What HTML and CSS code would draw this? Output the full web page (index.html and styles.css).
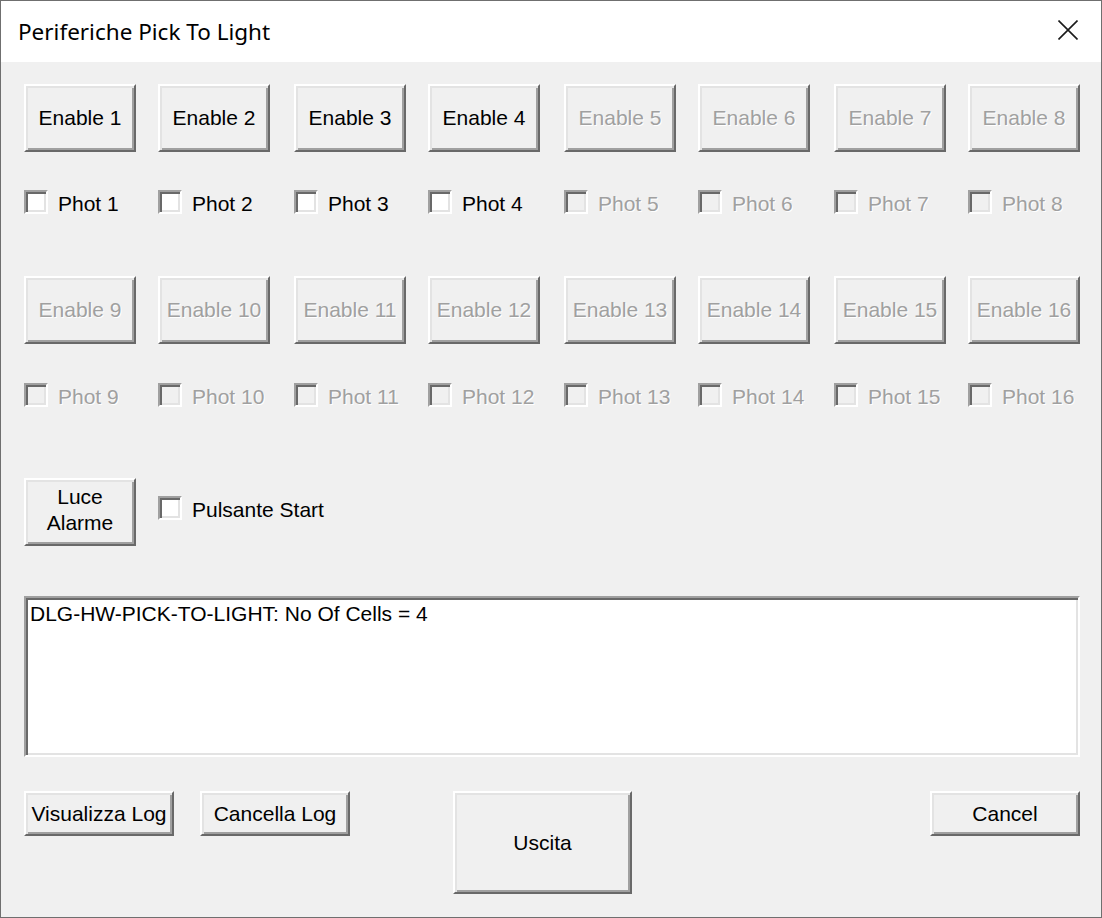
FILE: index.html
```html
<!DOCTYPE html>
<html lang="it">
<head>
<meta charset="utf-8">
<title>Periferiche Pick To Light</title>
<link rel="stylesheet" href="styles.css">
</head>
<body>
<div class="window">
  <div class="titlebar">
    <span class="title">Periferiche Pick To Light</span>
    <span class="close">
      <svg width="20" height="20" viewBox="0 0 20 20"><path d="M0.5 0.5 L19.5 19.5 M19.5 0.5 L0.5 19.5" stroke="#1b1b1b" stroke-width="1.6" fill="none"/></svg>
    </span>
  </div>
  <div class="content">
    <div class="grid row-btn1">
      <div class="btn">Enable 1</div>
      <div class="btn">Enable 2</div>
      <div class="btn">Enable 3</div>
      <div class="btn">Enable 4</div>
      <div class="btn disabled">Enable 5</div>
      <div class="btn disabled">Enable 6</div>
      <div class="btn disabled">Enable 7</div>
      <div class="btn disabled">Enable 8</div>
    </div>
    <div class="grid row-chk1">
      <label class="chk"><span class="box"></span><span class="lbl">Phot 1</span></label>
      <label class="chk"><span class="box"></span><span class="lbl">Phot 2</span></label>
      <label class="chk"><span class="box"></span><span class="lbl">Phot 3</span></label>
      <label class="chk"><span class="box"></span><span class="lbl">Phot 4</span></label>
      <label class="chk disabled"><span class="box"></span><span class="lbl">Phot 5</span></label>
      <label class="chk disabled"><span class="box"></span><span class="lbl">Phot 6</span></label>
      <label class="chk disabled"><span class="box"></span><span class="lbl">Phot 7</span></label>
      <label class="chk disabled"><span class="box"></span><span class="lbl">Phot 8</span></label>
    </div>
    <div class="grid row-btn2">
      <div class="btn disabled">Enable 9</div>
      <div class="btn disabled">Enable 10</div>
      <div class="btn disabled">Enable 11</div>
      <div class="btn disabled">Enable 12</div>
      <div class="btn disabled">Enable 13</div>
      <div class="btn disabled">Enable 14</div>
      <div class="btn disabled">Enable 15</div>
      <div class="btn disabled">Enable 16</div>
    </div>
    <div class="grid row-chk2">
      <label class="chk disabled"><span class="box"></span><span class="lbl">Phot 9</span></label>
      <label class="chk disabled"><span class="box"></span><span class="lbl">Phot 10</span></label>
      <label class="chk disabled"><span class="box"></span><span class="lbl">Phot 11</span></label>
      <label class="chk disabled"><span class="box"></span><span class="lbl">Phot 12</span></label>
      <label class="chk disabled"><span class="box"></span><span class="lbl">Phot 13</span></label>
      <label class="chk disabled"><span class="box"></span><span class="lbl">Phot 14</span></label>
      <label class="chk disabled"><span class="box"></span><span class="lbl">Phot 15</span></label>
      <label class="chk disabled"><span class="box"></span><span class="lbl">Phot 16</span></label>
    </div>
    <div class="grid row-alarm">
      <div class="btn two-line">Luce<br>Alarme</div>
      <label class="chk start"><span class="box"></span><span class="lbl">Pulsante Start</span></label>
    </div>
    <div class="log">DLG-HW-PICK-TO-LIGHT: No Of Cells = 4</div>
    <div class="bottom">
      <div class="btn small w150">Visualizza Log</div>
      <div class="btn small w150 cancella">Cancella Log</div>
      <div class="btn uscita">Uscita</div>
      <div class="btn small w150 cancel">Cancel</div>
    </div>
  </div>
</div>
</body>
</html>
```
FILE: styles.css
```css
html, body {
  margin: 0;
  padding: 0;
  background: #f0f0f0;
}
.window {
  width: 1102px;
  height: 918px;
  box-sizing: border-box;
  border: 1px solid #6f6f6f;
  background: #f0f0f0;
  font-family: "Liberation Sans", Arial, sans-serif;
  font-size: 21px;
  color: #000;
  overflow: hidden;
}
.titlebar {
  height: 61px;
  background: #fff;
  display: flex;
  align-items: center;
  justify-content: space-between;
  padding: 0 23px 0 17px;
}
.title {
  font-family: "Noto Sans", "Open Sans", sans-serif;
  font-size: 22.5px;
  color: #000;
  margin-top: 0;
}
.close {
  display: flex;
  margin-top: -4px;
}
.content {
  padding: 0 21px 0 23px;
}
.grid {
  display: grid;
  grid-template-columns: 134px 136px 134px 136px 134px 136px 134px 112px;
}
.row-btn1 { margin-top: 22px; }
.row-chk1 { margin-top: 38px; }
.row-btn2 { margin-top: 62px; }
.row-chk2 { margin-top: 39px; }
.row-alarm { margin-top: 71px; align-items: start; }

.btn {
  box-sizing: border-box;
  width: 112px;
  height: 68px;
  border: 2px solid;
  border-color: #fff #696969 #696969 #fff;
  box-shadow: inset 2px 2px 0 #e3e3e3, inset -2px -2px 0 #a0a0a0;
  background: #f0f0f0;
  display: flex;
  align-items: center;
  justify-content: center;
  text-align: center;
  white-space: nowrap;
}
.btn.disabled {
  color: #a0a0a0;
  text-shadow: 1px 1px 0 #fff;
}
.two-line {
  line-height: 26px;
  padding-bottom: 4px;
}

.chk {
  display: flex;
  align-items: flex-start;
  height: 24px;
  white-space: nowrap;
}
.box {
  box-sizing: border-box;
  width: 24px;
  height: 24px;
  flex: none;
  border: 2px solid;
  border-color: #a0a0a0 #fff #fff #a0a0a0;
  box-shadow: inset 2px 2px 0 #696969, inset -2px -2px 0 #e3e3e3;
  background: #fff;
}
.lbl {
  margin-left: 10px;
  line-height: 24px;
  padding-top: 2px;
}
.chk.disabled .box {
  background: #f0f0f0;
}
.chk.disabled .lbl {
  color: #a0a0a0;
  text-shadow: 1px 1px 0 #fff;
}
.chk.start {
  margin-top: 18px;
}

.log {
  margin-top: 50px;
  height: 161px;
  box-sizing: border-box;
  border: 2px solid;
  border-color: #a0a0a0 #fff #fff #a0a0a0;
  box-shadow: inset 2px 2px 0 #696969, inset -2px -2px 0 #e3e3e3;
  background: #fff;
  padding: 4px 4px;
  line-height: 24px;
}

.bottom {
  margin-top: 34px;
  display: flex;
  align-items: flex-start;
}
.btn.small {
  height: 45px;
}
.btn.w150 {
  width: 150px;
}
.btn.cancella {
  margin-left: 26px;
}
.btn.uscita {
  width: 179px;
  height: 103px;
  margin-left: 103px;
}
.btn.cancel {
  margin-left: auto;
}
```
